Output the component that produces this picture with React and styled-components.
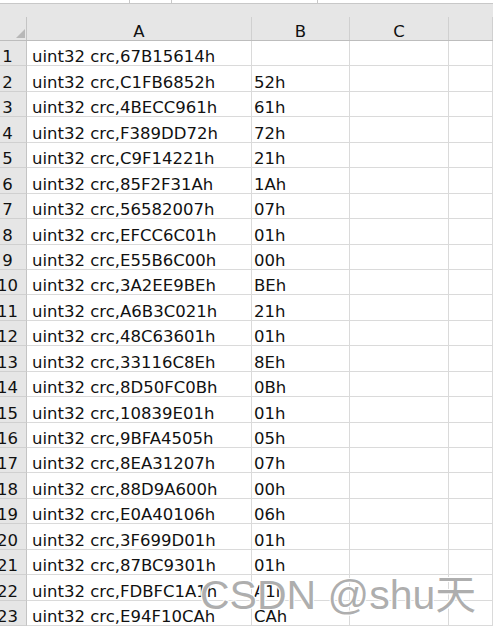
import React from "react";
import styled, { createGlobalStyle } from "styled-components";

const GlobalStyle = createGlobalStyle`
  html, body {
    margin: 0;
    padding: 0;
    background: #fff;
    overflow: hidden;
  }
  * { box-sizing: border-box; }
`;

const COLS = "27px 225px 98px 99px 1fr";

const Sheet = styled.div`
  position: relative;
  width: 493px;
  height: 628px;
  overflow: hidden;
  font-family: "DejaVu Sans", "Noto Sans CJK SC", sans-serif;
  font-size: 16.5px;
  color: #111;
`;

const TopStrip = styled.div`
  height: 4px;
  display: grid;
  grid-template-columns: 130px 42px 146px 1fr;
  background: #fff;
  border-bottom: 1px solid #c8c8c8;
`;

const StripBox = styled.div`
  border-right: 1px solid #c8c8c8;
`;

const HeaderGap = styled.div`
  height: 13px;
  background: #e6e6e6;
`;

const HeaderRow = styled.div`
  display: grid;
  grid-template-columns: ${COLS};
  height: 24px;
  background: #e6e6e6;
  border-bottom: 1px solid #bdbdbd;
`;

const ColHead = styled.div`
  display: flex;
  align-items: flex-end;
  justify-content: center;
  padding-bottom: 0;
  line-height: 17px;
  border-right: 1px solid ${(p) => (p.$corner ? "#c4c4c4" : "#d0d0d0")};
  position: relative;
`;

const Corner = styled.svg`
  position: absolute;
  right: 1px;
  bottom: 2px;
`;

const Grid = styled.div`
  display: grid;
  grid-template-columns: ${COLS};
  grid-auto-rows: 25.45px;
`;

const RowNum = styled.div`
  display: flex;
  align-items: flex-end;
  justify-content: center;
  padding-right: 11px;
  line-height: 17px;
  background: #e6e6e6;
  border-right: 1px solid #c4c4c4;
  border-bottom: 1px solid #d0d0d0;
  white-space: nowrap;
  overflow: hidden;
`;

const Cell = styled.div`
  display: flex;
  align-items: flex-end;
  padding-left: ${(p) => (p.$first ? "5px" : "2px")};
  line-height: 17px;
  border-right: 1px solid #dadada;
  border-bottom: 1px solid #dadada;
  white-space: nowrap;
`;

const Watermark = styled.div`
  position: absolute;
  left: 200px;
  top: 571px;
  font-family: "Liberation Sans", "Noto Sans CJK SC", sans-serif;
  font-size: 41px;
  line-height: 48px;
  color: rgba(120, 120, 120, 0.6);
  text-shadow: 1px 1px 0 rgba(255, 255, 255, 0.9), -1px -1px 0 rgba(255, 255, 255, 0.9),
    1px -1px 0 rgba(255, 255, 255, 0.9), -1px 1px 0 rgba(255, 255, 255, 0.9);
  white-space: nowrap;
`;

const rows = [
  ["67B15614h", ""],
  ["C1FB6852h", "52h"],
  ["4BECC961h", "61h"],
  ["F389DD72h", "72h"],
  ["C9F14221h", "21h"],
  ["85F2F31Ah", "1Ah"],
  ["56582007h", "07h"],
  ["EFCC6C01h", "01h"],
  ["E55B6C00h", "00h"],
  ["3A2EE9BEh", "BEh"],
  ["A6B3C021h", "21h"],
  ["48C63601h", "01h"],
  ["33116C8Eh", "8Eh"],
  ["8D50FC0Bh", "0Bh"],
  ["10839E01h", "01h"],
  ["9BFA4505h", "05h"],
  ["8EA31207h", "07h"],
  ["88D9A600h", "00h"],
  ["E0A40106h", "06h"],
  ["3F699D01h", "01h"],
  ["87BC9301h", "01h"],
  ["FDBFC1A1h", "A1h"],
  ["E94F10CAh", "CAh"],
];

export default function App() {
  return (
    <>
      <GlobalStyle />
      <Sheet>
        <TopStrip>
          <StripBox />
          <StripBox />
          <StripBox />
          <div />
        </TopStrip>
        <HeaderGap />
        <HeaderRow>
          <ColHead $corner>
            <Corner width="9" height="9" viewBox="0 0 9 9">
              <polygon points="9,0 9,9 0,9" fill="#b8b8b8" />
            </Corner>
          </ColHead>
          <ColHead>A</ColHead>
          <ColHead>B</ColHead>
          <ColHead>C</ColHead>
          <ColHead />
        </HeaderRow>
        <Grid>
          {rows.map(([crc, val], i) => (
            <React.Fragment key={i}>
              <RowNum>{i + 1}</RowNum>
              <Cell $first>uint32 crc,{crc}</Cell>
              <Cell>{val}</Cell>
              <Cell />
              <Cell />
            </React.Fragment>
          ))}
        </Grid>
        <Watermark>CSDN @shu天</Watermark>
      </Sheet>
    </>
  );
}
